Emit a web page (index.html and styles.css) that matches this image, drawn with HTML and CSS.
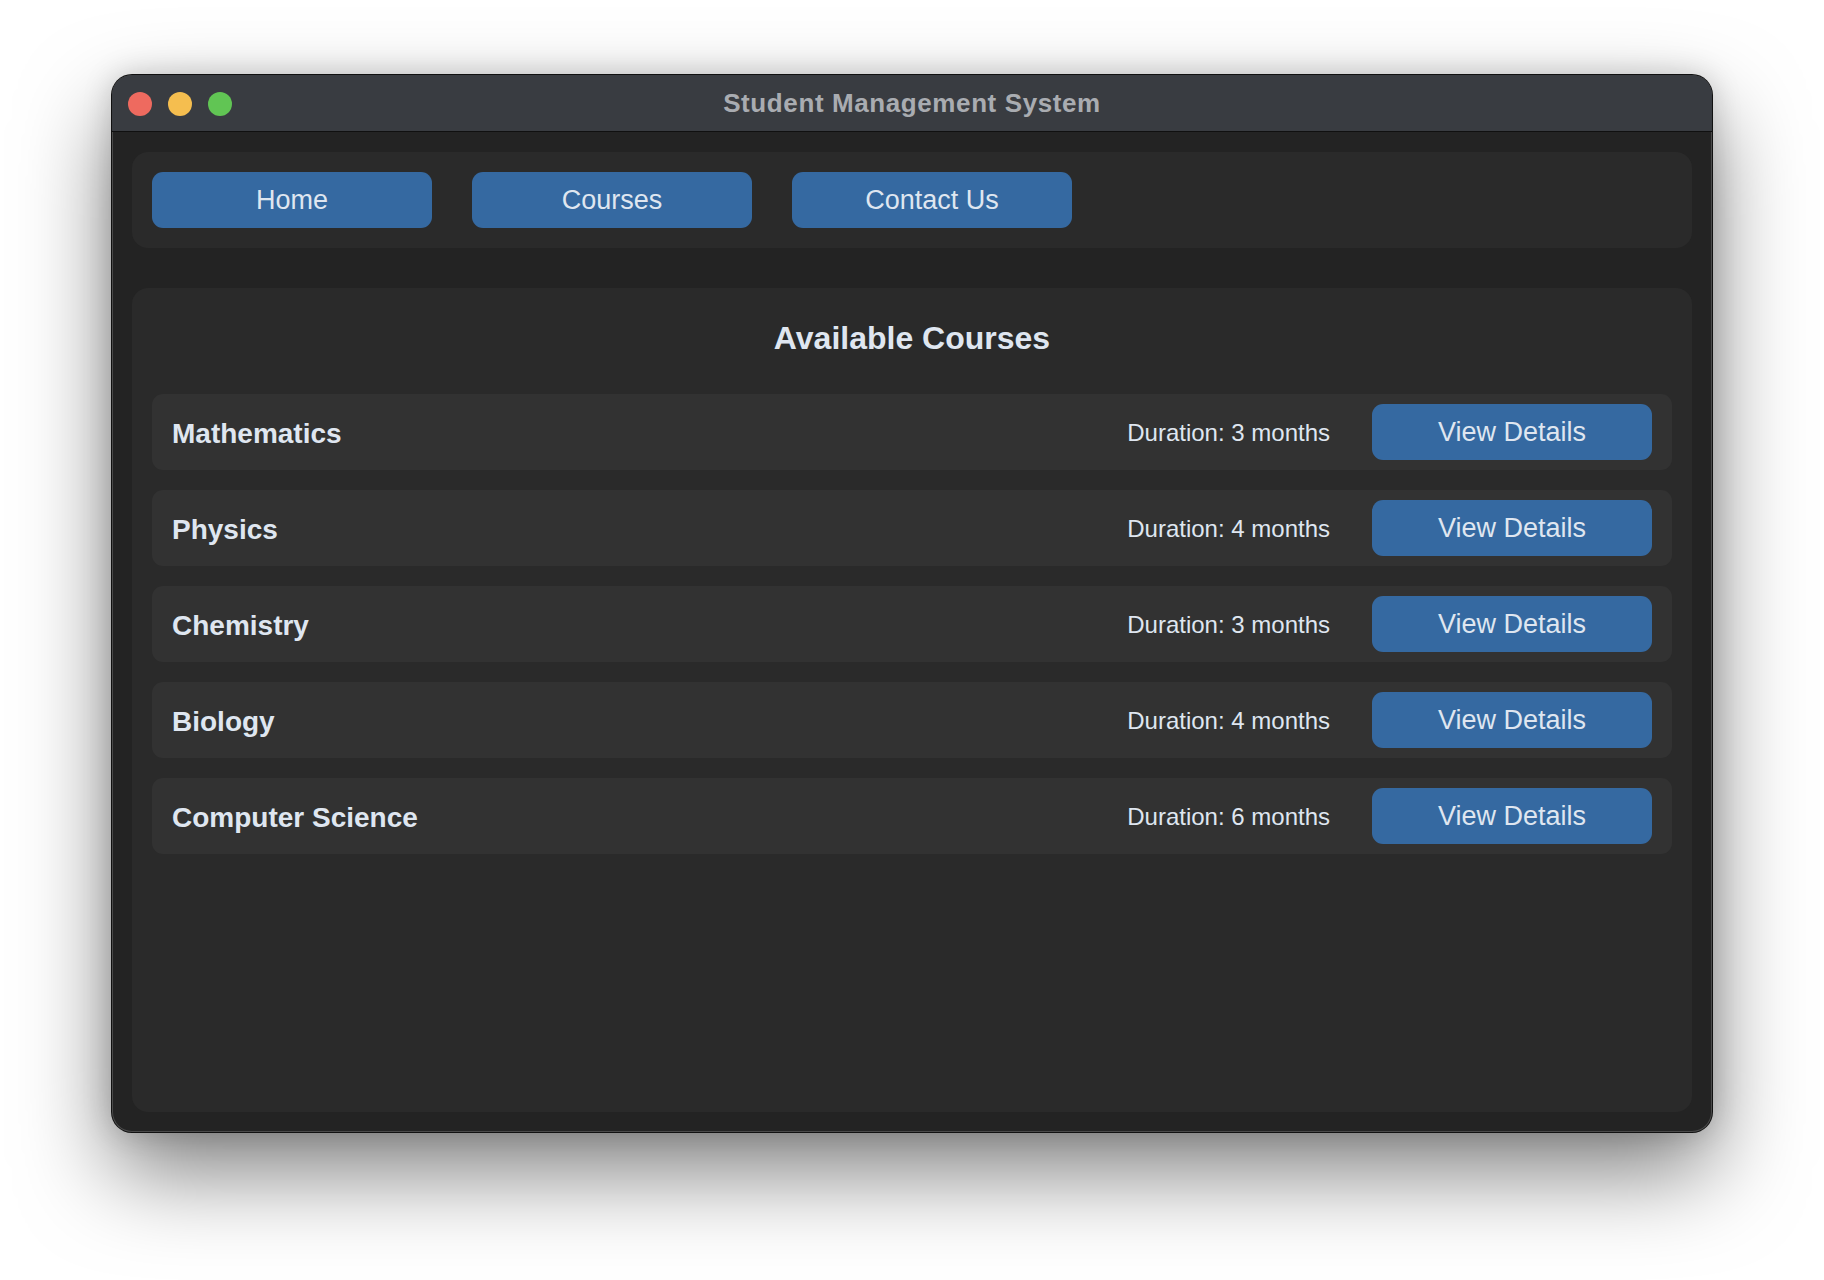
FILE: index.html
```html
<!DOCTYPE html>
<html lang="en">
<head>
<meta charset="utf-8">
<title>Student Management System</title>
<link rel="stylesheet" href="styles.css">
</head>
<body>
<div class="window">
  <div class="titlebar">
    <div class="lights">
      <span class="light red"></span>
      <span class="light yellow"></span>
      <span class="light green"></span>
    </div>
    <div class="title">Student Management System</div>
    <div class="spacer"></div>
  </div>
  <div class="content">
    <nav class="nav">
      <button class="btn">Home</button>
      <button class="btn">Courses</button>
      <button class="btn">Contact Us</button>
    </nav>
    <main class="panel">
      <h2 class="heading">Available Courses</h2>
      <div class="list">
        <div class="row"><span class="name">Mathematics</span><span class="dur">Duration: 3 months</span><button class="btn">View Details</button></div>
        <div class="row"><span class="name">Physics</span><span class="dur">Duration: 4 months</span><button class="btn">View Details</button></div>
        <div class="row"><span class="name">Chemistry</span><span class="dur">Duration: 3 months</span><button class="btn">View Details</button></div>
        <div class="row"><span class="name">Biology</span><span class="dur">Duration: 4 months</span><button class="btn">View Details</button></div>
        <div class="row"><span class="name">Computer Science</span><span class="dur">Duration: 6 months</span><button class="btn">View Details</button></div>
      </div>
    </main>
  </div>
</div>
</body>
</html>
```
FILE: styles.css
```css
html, body {
  margin: 0;
  padding: 0;
  background: #ffffff;
}
body {
  box-sizing: border-box;
  min-height: 1280px;
  padding: 75px 112px 0 112px;
  font-family: "Liberation Sans", Arial, sans-serif;
}
.window {
  width: 1600px;
  height: 1057px;
  border-radius: 20px;
  background: #232323;
  display: flex;
  flex-direction: column;
  overflow: hidden;
  box-shadow: 0 0 0 1px #111111, inset 0 0 0 1px rgba(255,255,255,0.18), 0 40px 90px rgba(0,0,0,0.5), 0 0 30px rgba(0,0,0,0.18);
}
.titlebar {
  height: 56px;
  flex: none;
  background: #393c41;
  border-bottom: 1px solid #101010;
  display: grid;
  grid-template-columns: 1fr auto 1fr;
  align-items: center;
}
.lights {
  display: flex;
  gap: 16px;
  padding-left: 16px;
  padding-top: 1px;
}
.light {
  width: 24px;
  height: 24px;
  border-radius: 50%;
  display: block;
}
.red { background: #ee6a5f; }
.yellow { background: #f5be4f; }
.green { background: #61c554; }
.title {
  color: #a9acb1;
  font-weight: bold;
  font-size: 26px;
  font-family: "Liberation Sans", Arial, sans-serif;
  letter-spacing: 0.6px;
}
.content {
  flex: 1;
  padding: 20px;
  display: flex;
  flex-direction: column;
  gap: 40px;
}
.nav {
  background: #2a2a2a;
  border-radius: 16px;
  padding: 20px;
  display: flex;
  gap: 40px;
}
.btn {
  width: 280px;
  height: 56px;
  border: none;
  border-radius: 11px;
  background: #3569a1;
  color: #dfe6f0;
  font-family: "Liberation Sans", Arial, sans-serif;
  font-size: 27px;
  padding: 1px 0 0;
  flex: none;
}
.panel {
  flex: 1;
  background: #2a2a2a;
  border-radius: 16px;
  padding: 32px 20px 20px;
}
.heading {
  margin: 0 0 38px;
  text-align: center;
  color: #dfe6f0;
  font-size: 32px;
  line-height: 36px;
  font-weight: bold;
}
.list {
  display: flex;
  flex-direction: column;
  gap: 20px;
}
.row {
  height: 76px;
  box-sizing: border-box;
  background: #323232;
  border-radius: 11px;
  padding: 0 20px;
  display: flex;
  align-items: center;
}
.name {
  flex: 1;
  color: #dfe6f0;
  font-size: 28px;
  font-weight: bold;
  padding-top: 3px;
}
.dur {
  color: #dfe6f0;
  font-size: 24px;
  margin-right: 42px;
  padding-top: 2px;
}
```
